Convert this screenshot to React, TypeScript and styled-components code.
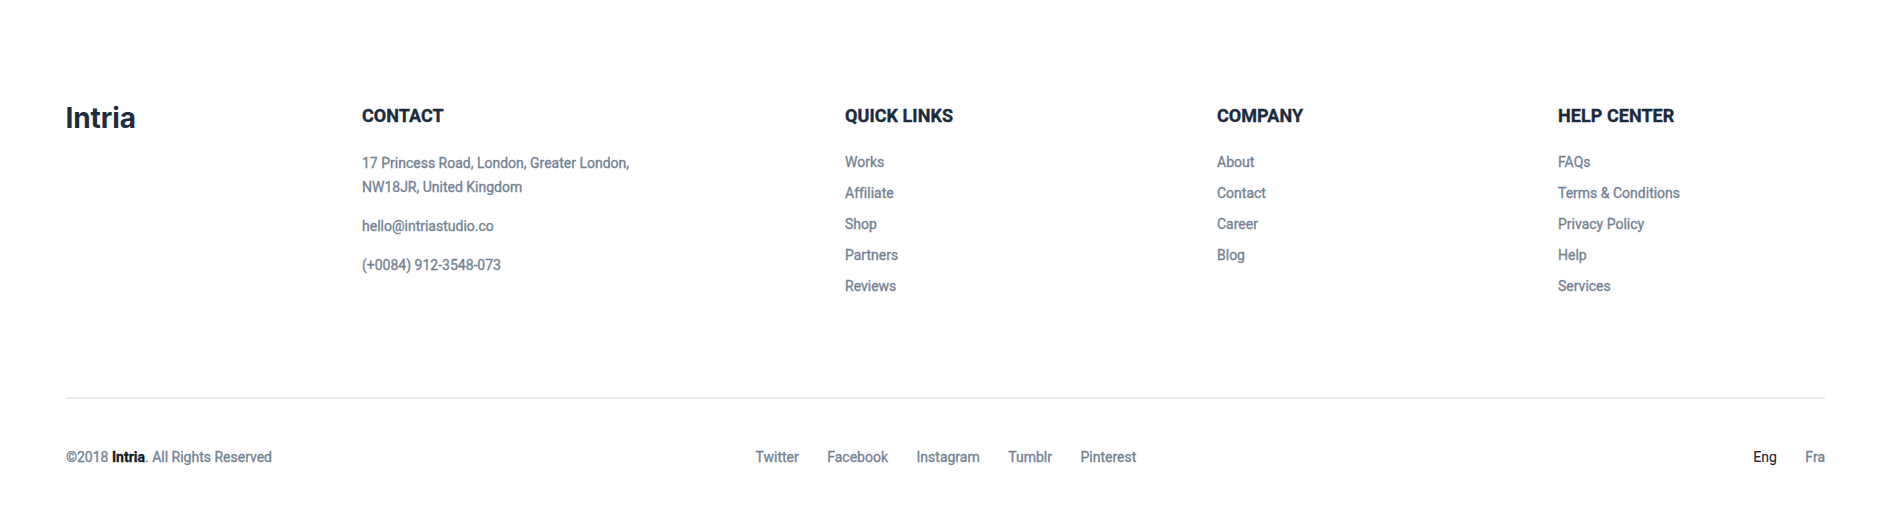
import React from "react";
import styled, { createGlobalStyle } from "styled-components";

const Global = createGlobalStyle`
  * { box-sizing: border-box; margin: 0; padding: 0; }
  body { background: #fff; font-family: Roboto, sans-serif; font-size: 14px; color: #748394; font-variant-ligatures: none; -webkit-text-stroke: 0.35px currentColor; }
  ul { list-style: none; }
  a { color: inherit; text-decoration: none; }
`;
const Footer = styled.footer`
  height: 512px;
  padding: 100px 71px 0 66px;
`;
const Top = styled.div`
  display: flex;
  height: 299px;
  border-bottom: 2px solid #ebebeb;
`;
const Logo = styled.div`
  width: 296px;
  font: 700 28px/36px Inter, sans-serif;
  letter-spacing: -0.1px;
  text-indent: -0.5px;
  -webkit-text-stroke: 0;
  color: #1d2d40;
`;
const Column = styled.section<{ $w?: number }>`
  width: ${(p) => (p.$w ? p.$w + "px" : "auto")};
  flex: none;
`;
const Title = styled.h3`
  font-size: 18px;
  line-height: 32px;
  font-weight: 700;
  letter-spacing: 0.05px;
  color: #1b2b3e;
  white-space: nowrap;
`;
const Links = styled.ul`
  margin-top: 15px;
  li { height: 31px; line-height: 31px; white-space: nowrap; }
`;
const Contact = styled.div`
  margin-top: 19px;
  p { line-height: 24px; margin-bottom: 15px; white-space: nowrap; }
`;
const Bottom = styled.div`
  display: grid;
  grid-template-columns: 689.5px 1fr auto;
  padding-top: 46px;
  line-height: 24px;
`;
const Row = styled.nav`
  display: flex;
  gap: 28.5px;
`;
const Brand = styled.strong`
  color: #111c2b;
`;
const Active = styled.a`
  && { color: #1b2633; -webkit-text-stroke-width: 0.1px; }
`;

const columns = [
  { title: "QUICK LINKS", w: 372, links: ["Works", "Affiliate", "Shop", "Partners", "Reviews"] },
  { title: "COMPANY", w: 341, links: ["About", "Contact", "Career", "Blog"] },
  { title: "HELP CENTER", links: ["FAQs", "Terms & Conditions", "Privacy Policy", "Help", "Services"] },
];
const social = ["Twitter", "Facebook", "Instagram", "Tumblr", "Pinterest"];

export default function App() {
  return (
    <Footer>
      <Global />
      <Top>
        <Logo>Intria</Logo>
        <Column $w={483}>
          <Title>CONTACT</Title>
          <Contact>
            <p>17 Princess Road, London, Greater London,<br />NW18JR, United Kingdom</p>
            <p>hello@intriastudio.co</p>
            <p>(+0084) 912-3548-073</p>
          </Contact>
        </Column>
        {columns.map((c) => (
          <Column key={c.title} $w={c.w}>
            <Title>{c.title}</Title>
            <Links>{c.links.map((l) => <li key={l}><a href="#">{l}</a></li>)}</Links>
          </Column>
        ))}
      </Top>
      <Bottom>
        <p>©2018 <Brand>Intria</Brand>. All Rights Reserved</p>
        <Row>{social.map((s) => <a key={s} href="#">{s}</a>)}</Row>
        <Row><Active href="#">Eng</Active><a href="#">Fra</a></Row>
      </Bottom>
    </Footer>
  );
}
